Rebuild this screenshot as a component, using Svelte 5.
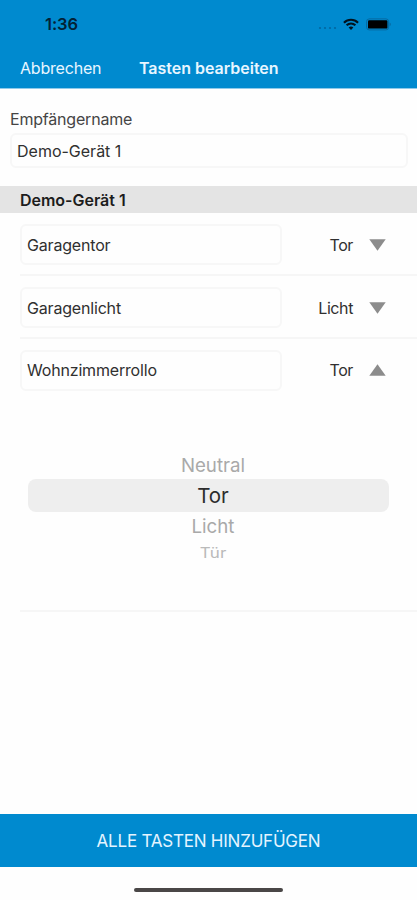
<script lang="ts">
  const deviceName = "Demo-Gerät 1";
  let openRow = $state(2);

  const rows = $state([
    { name: "Garagentor", type: "Tor" },
    { name: "Garagenlicht", type: "Licht" },
    { name: "Wohnzimmerrollo", type: "Tor" },
  ]);

  const options = ["Neutral", "Tor", "Licht", "Tür"];

  function toggle(i: number) {
    openRow = openRow === i ? -1 : i;
  }
</script>

<div class="screen">
  <header>
    <div class="status">
      <span class="time">1:36</span>
      <div class="indicators">
        <svg class="dots" width="20" height="4" viewBox="0 0 20 4">
          <circle cx="2" cy="2" r="1.1" />
          <circle cx="7" cy="2" r="1.1" />
          <circle cx="12" cy="2" r="1.1" />
          <circle cx="17" cy="2" r="1.1" />
        </svg>
        <svg class="wifi" width="16" height="13" viewBox="0 0 17 13">
          <path d="M1 4.6C5.2.5 11.8.5 16 4.6" />
          <path d="M3.8 7.4c2.7-2.5 6.7-2.5 9.4 0" />
          <path class="tip" d="M6 9.6c1.4-1.2 3.6-1.2 5 0L8.5 12.4z" />
        </svg>
        <svg class="battery" width="26" height="13" viewBox="0 0 26 13">
          <rect class="shell" x=".6" y=".9" width="22" height="11" rx="2.6" />
          <rect x="2" y="2.2" width="19.4" height="8.4" rx="1.2" />
          <path class="cap" d="M23.6 4.6c1.6.6 1.6 3 0 3.7z" />
        </svg>
      </div>
    </div>
    <nav>
      <button class="cancel">Abbrechen</button>
      <h1>Tasten bearbeiten</h1>
    </nav>
  </header>

  <section class="receiver">
    <div class="label">Empfängername</div>
    <div class="field">{deviceName}</div>
  </section>

  <h2>{deviceName}</h2>

  <ul>
    {#each rows as row, i}
      <li>
        <div class="row" class:open={openRow === i}>
          <div class="field">{row.name}</div>
          <button class="type" onclick={() => toggle(i)}>
            <span>{row.type}</span>
            <svg class:up={openRow === i} width="17" height="12" viewBox="0 0 17 12">
              <path d="M.3.3h16.4L8.5 11.8z" />
            </svg>
          </button>
        </div>
        {#if openRow === i}
          <div class="picker">
            {#each options as option}
              <button
                class="option"
                class:far={option === "Tür"}
                class:selected={option === row.type}
                onclick={() => (row.type = option)}
              >{option}</button>
            {/each}
          </div>
        {/if}
      </li>
    {/each}
  </ul>

  <footer>
    <button class="add">ALLE TASTEN HINZUFÜGEN</button>
    <div class="home"></div>
  </footer>
</div>

<style>
  :global(body) {
    background: #fefefe;
  }
  .screen {
    box-sizing: border-box;
    width: 100%;
    height: 900px;
    display: flex;
    flex-direction: column;
    overflow: hidden;
    font-family: Inter, "Liberation Sans", sans-serif;
    font-size: 16px;
    color: #303030;
  }
  button {
    margin: 0;
    padding: 0;
    border: 0;
    background: none;
    font: inherit;
    color: inherit;
  }
  svg {
    display: block;
  }

  header {
    flex: none;
    height: 88px;
    background: #008acf;
    border-bottom: 1px solid #8fcaea;
  }
  .status {
    display: flex;
    justify-content: space-between;
    align-items: center;
    height: 48px;
    padding: 0 25px 0 45px;
  }
  .time {
    font-size: 16.5px;
    font-weight: 600;
    letter-spacing: -0.1px;
    color: #032236;
  }
  .indicators {
    display: flex;
    align-items: center;
  }
  .dots {
    fill: #0067a0;
    margin: 8px 5px 0 0;
  }
  .wifi {
    fill: none;
    stroke: #02121e;
    stroke-width: 2.2;
    margin-right: 7px;
  }
  .wifi .tip {
    fill: #02121e;
    stroke: none;
  }
  .battery .shell {
    fill: none;
    stroke: #0668a0;
    stroke-width: 1;
  }
  .battery .cap {
    fill: #0668a0;
  }
  nav {
    display: flex;
    align-items: center;
    height: 40px;
    padding-left: 20px;
    color: #e8f6ff;
  }
  .cancel {
    width: 119px;
    text-align: left;
    letter-spacing: -0.2px;
  }
  h1 {
    margin: 0;
    font-size: 16px;
    font-weight: 600;
    letter-spacing: -0.02px;
  }

  .receiver {
    padding: 20px 9px 18px 10px;
  }
  .label {
    height: 24px;
    line-height: 20px;
    letter-spacing: -0.2px;
    color: #454545;
  }
  .field {
    box-sizing: border-box;
    display: flex;
    align-items: center;
    height: 35px;
    padding-left: 5px;
    border: 2px solid #f7f7f7;
    border-radius: 6px;
  }

  h2 {
    flex: none;
    margin: 0;
    height: 27px;
    padding-left: 20px;
    background: #e4e4e4;
    font-size: 16px;
    font-weight: 600;
    line-height: 28px;
    letter-spacing: -0.02px;
    color: #1c1c1c;
  }

  ul {
    margin: 0;
    padding: 0 0 0 20px;
    list-style: none;
  }
  li {
    border-bottom: 2px solid #f6f6f6;
  }
  .row {
    box-sizing: border-box;
    display: flex;
    align-items: center;
    justify-content: space-between;
    height: 61px;
    padding: 2px 31px 0 0;
  }
  .row.open {
    padding-top: 1px;
  }
  li .field {
    width: 262px;
    height: 41px;
    letter-spacing: -0.18px;
  }
  .type {
    display: flex;
    align-items: center;
    gap: 16px;
    letter-spacing: -0.4px;
  }
  .type svg {
    fill: #8c8c8c;
  }
  .type .up {
    transform: rotate(180deg);
  }

  .picker {
    display: flex;
    flex-direction: column;
    align-items: center;
    height: 210px;
    padding: 51px 28px 0 8px;
    box-sizing: border-box;
  }
  .option {
    width: 100%;
    height: 28px;
    padding-left: 9px;
    font-size: 18.7px;
    color: #a9a9a9;
  }
  .option.selected {
    height: 33px;
    border-radius: 8px;
    background: #eeeeee;
    font-size: 20.5px;
    color: #2c2c2c;
  }
  .option.far {
    height: 25px;
    font-size: 17px;
    color: #bababa;
    transform: scaleY(0.82);
  }

  footer {
    margin-top: auto;
    height: 86px;
  }
  .add {
    width: 100%;
    height: 53px;
    background: #008acf;
    font-size: 17px;
    letter-spacing: -0.22px;
    color: #e4f4ff;
  }
  .home {
    width: 149px;
    height: 4px;
    margin: 21px auto 0;
    border-radius: 2px;
    background: #4a4747;
  }
</style>
